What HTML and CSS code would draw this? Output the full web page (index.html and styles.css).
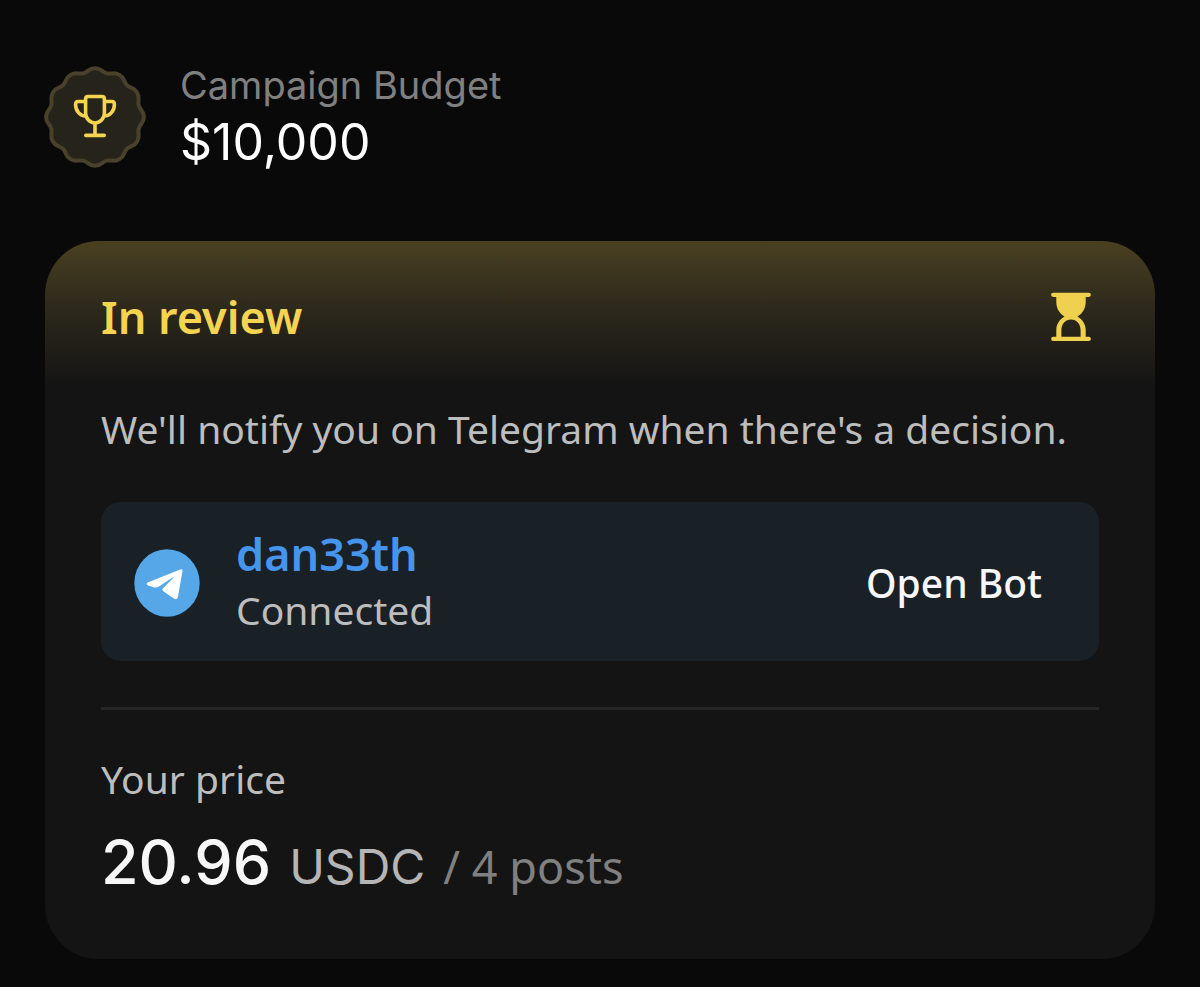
FILE: index.html
```html
<!DOCTYPE html>
<html lang="en">
<head>
  <meta charset="UTF-8">
  <meta name="viewport" content="width=device-width, initial-scale=1.0">
  <title>Campaign Budget</title>
  <link rel="stylesheet" href="styles.css">
</head>
<body>
  <header class="budget">
    <svg class="badge" viewBox="-51 -51 102 102" aria-hidden="true">
      <path class="badge-shape" d="M-6.5 -46.6C-3 -49.6 3 -49.6 6.5 -46.6C10.5 -43.4 12.5 -43 17.7 -43.6C22.2 -44.2 27.4 -41.2 28.9 -37.1C30.8 -32.3 32.3 -30.8 37.1 -28.9C41.2 -27.4 44.2 -22.2 43.6 -17.7C43 -12.5 43.4 -10.5 46.6 -6.5C49.6 -3 49.6 3 46.6 6.5C43.4 10.5 43 12.5 43.6 17.7C44.2 22.2 41.2 27.4 37.1 28.9C32.3 30.8 30.8 32.3 28.9 37.1C27.4 41.2 22.2 44.2 17.7 43.6C12.5 43 10.5 43.4 6.5 46.6C3 49.6 -3 49.6 -6.5 46.6C-10.5 43.4 -12.5 43 -17.7 43.6C-22.2 44.2 -27.4 41.2 -28.9 37.1C-30.8 32.3 -32.3 30.8 -37.1 28.9C-41.2 27.4 -44.2 22.2 -43.6 17.7C-43 12.5 -43.4 10.5 -46.6 6.5C-49.6 3 -49.6 -3 -46.6 -6.5C-43.4 -10.5 -43 -12.5 -43.6 -17.7C-44.2 -22.2 -41.2 -27.4 -37.1 -28.9C-32.3 -30.8 -30.8 -32.3 -28.9 -37.1C-27.4 -41.2 -22.2 -44.2 -17.7 -43.6C-12.5 -43 -10.5 -43.4 -6.5 -46.6Z"/>
      <path class="trophy" d="M-7 -20.5H7Q9.4 -20.5 9.4 -18V-4C9.4 1.5 5 6 0 6S-9.4 1.5 -9.4 -4V-18Q-9.4 -20.5 -7 -20.5ZM-9.4 -15.5H-17Q-19.4 -15.5 -19.4 -12.5C-19.4 -6 -15 -1.2 -9.4 -1M9.4 -15.5H17Q19.4 -15.5 19.4 -12.5C19.4 -6 15 -1.2 9.4 -1M0 6V18.4M-9.2 18.4H9.2"/>
    </svg>
    <div class="budget-text">
      <div class="budget-label">Campaign Budget</div>
      <div class="budget-value">$10,000</div>
    </div>
  </header>

  <main class="card">
    <div class="card-head">
      <h1>In review</h1>
      <svg class="hourglass" viewBox="0 0 40 50" aria-hidden="true">
        <path d="M2.2 .7H37.8A2 2 0 0 1 37.8 4.9H34.7V10C34.7 16.5 31.5 21.5 26.5 24.5C31.5 27.5 34.7 32 34.7 38V44.8H37.8A2 2 0 0 1 37.8 49H2.2A2 2 0 0 1 2.2 44.8H5.3V38C5.3 32 8.5 27.5 13.5 24.5C8.5 21.5 5.3 16.5 5.3 10V4.9H2.2A2 2 0 0 1 2.2 .7ZM10.4 44.8H29.6V38C29.6 32 25.5 27.4 20 27.4S10.4 32 10.4 38Z"/>
      </svg>
    </div>

    <p class="message">We'll notify you on Telegram when there's a decision.</p>

    <div class="account">
      <svg class="telegram" viewBox="0 0 66 68" aria-hidden="true">
        <ellipse cx="33" cy="34" rx="32.7" ry="33.7" fill="#55a7e8"/>
        <path fill="#fff" d="M14.2 33.3L46.2 20.4Q48.8 19.5 48.5 22.2L43.8 48.2Q43 51.2 40.3 49.8L29.2 42.2Q27.5 40.8 29 39.2L39.4 28.8Q39.6 28 38.6 28.4L25 37.6Q22.8 39 20.3 38.4L14.2 36.6Q11 35 14.2 33.3Z"/>
      </svg>
      <div class="account-text">
        <div class="username">dan33th</div>
        <div class="status">Connected</div>
      </div>
      <button class="open-bot" type="button">Open Bot</button>
    </div>

    <hr class="divider">

    <div class="price-label">Your price</div>
    <div class="price">
      <span class="amount">20.96</span>
      <span class="currency">USDC</span>
      <span class="posts">/ 4 posts</span>
    </div>
  </main>
</body>
</html>
```
FILE: styles.css
```css
* {
  box-sizing: border-box;
}
body {
  margin: 0;
  padding: 61px 45px 28px;
  background: #090909;
  color: #fff;
  font-family: "Noto Sans", sans-serif;
  font-size: 39px;
  line-height: 48px;
}
h1, p {
  margin: 0;
}
.budget {
  display: flex;
  align-items: flex-start;
  gap: 34px;
  margin-bottom: 65px;
}
.badge {
  width: 102px;
  height: 102px;
  margin: 5px 0 0 -1px;
  flex-shrink: 0;
}
.badge-shape {
  fill: #26231a;
  stroke: #4a412b;
  stroke-width: 4;
}
.trophy {
  fill: none;
  stroke: #f5d452;
  stroke-width: 3.6;
  stroke-linecap: round;
  stroke-linejoin: round;
}
.budget-text {
  font-family: Inter, sans-serif;
}
.budget-label {
  color: #808080;
  font-size: 38px;
}
.budget-value {
  font-size: 50px;
  line-height: 67px;
}
.card {
  padding: 48px 56px 52px;
  border-radius: 54px;
  background: #141414 linear-gradient(#4a4021, #2c281b 70px, #141414 145px) no-repeat;
}
.card-head {
  display: flex;
  align-items: center;
  justify-content: space-between;
  padding-right: 8px;
  margin-bottom: 60px;
}
h1 {
  color: #f5d452;
  font-size: 45px;
  font-weight: 600;
  line-height: 56px;
}
.hourglass {
  width: 40px;
  height: 50px;
  fill: #f0d04f;
}
.message {
  color: #bdbdbd;
}
.account {
  display: flex;
  align-items: center;
  gap: 36px;
  margin-top: 49px;
  padding: 25px 57px 22px 33px;
  border-radius: 20px;
  background: #192026;
}
.telegram {
  width: 66px;
  height: 68px;
  flex-shrink: 0;
}
.username {
  color: #4695ec;
  font-size: 45px;
  font-weight: 600;
  line-height: 54px;
}
.status {
  color: #bdbdbd;
  line-height: 58px;
}
.open-bot {
  margin-left: auto;
  padding: 0;
  border: none;
  background: none;
  color: #f7f7f9;
  font: inherit;
  font-weight: 500;
  cursor: pointer;
}
.divider {
  height: 3px;
  margin: 46px 0 45px;
  border: none;
  background: #262626;
}
.price-label {
  color: #bdbdbd;
}
.price {
  display: flex;
  align-items: baseline;
  gap: 18px;
  margin-top: 19px;
  line-height: 80px;
}
.amount {
  color: #f7f7f7;
  font-family: Inter, sans-serif;
  font-size: 61px;
  font-weight: 500;
}
.currency {
  color: #b5b5b5;
  font-family: Inter, sans-serif;
  font-size: 48px;
}
.posts {
  color: #808080;
  font-size: 45px;
}
```
